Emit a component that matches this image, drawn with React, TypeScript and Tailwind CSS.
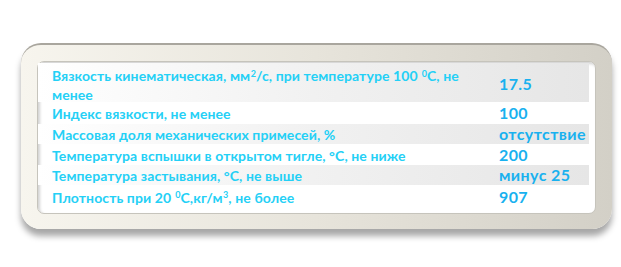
import React from 'react';

const Sup = ({ children }: { children: React.ReactNode }) => (
  <sup className="text-[9px] leading-none ml-[0.5px]">{children}</sup>
);

const rows = [
  {
    label: (
      <>
        Вязкость кинематическая, мм<Sup>2</Sup>/с, при температуре 100 <Sup>0</Sup>С, не менее
      </>
    ),
    value: '17.5',
    shaded: true,
    h: 'h-[39px]',
    lead: 'leading-[19px] pt-[3px]',
  },
  { label: 'Индекс вязкости, не менее', value: '100', shaded: false, h: 'h-[22px]', lead: 'leading-[18px] pt-[2px]' },
  { label: 'Массовая доля механических примесей, %', value: 'отсутствие', shaded: true, h: 'h-[20px]', lead: 'leading-[18px] pt-[2px]' },
  { label: 'Температура вспышки в открытом тигле, °С, не ниже', value: '200', shaded: false, h: 'h-[21px]', lead: 'leading-[18px] pt-[2px]' },
  { label: 'Температура застывания, °С, не выше', value: 'минус 25', shaded: true, h: 'h-[20px]', lead: 'leading-[18px] pt-[2px]' },
  {
    label: (
      <>
        Плотность при 20 <Sup>0</Sup>С,кг/м<Sup>3</Sup>, не более
      </>
    ),
    value: '907',
    shaded: false,
    h: 'h-[23px]',
    lead: 'leading-[18px] pt-[2px]',
  },
];

export default function App() {
  return (
    <div className="w-[621px] h-[267px] bg-white pt-[43px] pl-[21px]" style={{ fontFamily: 'Lato, "Open Sans", sans-serif' }}>
      <div className="w-[591px] h-[186px] rounded-[20px] bg-gradient-to-r from-[#f7f5ee] via-[#e7e4db] to-[#d3d0c7] border-t-2 border-[#a9a69e] shadow-[0_7px_6px_rgba(0,0,0,0.35)] pt-[16px] pl-[16px] pr-[16px]">
        <div className="w-[559px] h-[153px] rounded-[7px] bg-white border border-[#c6c4bc] shadow-[inset_2px_2px_3px_rgba(0,0,0,0.18)] pt-[1px] pr-[6px]">
          {rows.map((r, i) => (
            <div
              key={i}
              className={`grid grid-cols-[461px_1fr] items-center ${r.h} ${
                r.shaded ? 'bg-gradient-to-r from-white via-[#f1f1f1] to-[#e6e6e6]' : ''
              }`}
            >
              <div className={`pl-[14px] pr-[6px] text-[14px] tracking-[0.1px] font-bold text-[#24d0f6] ${r.lead}`}>{r.label}</div>
              <div className="text-[16px] leading-[18px] tracking-[0.4px] font-bold text-[#19b1ef] whitespace-nowrap">{r.value}</div>
            </div>
          ))}
        </div>
      </div>
    </div>
  );
}
